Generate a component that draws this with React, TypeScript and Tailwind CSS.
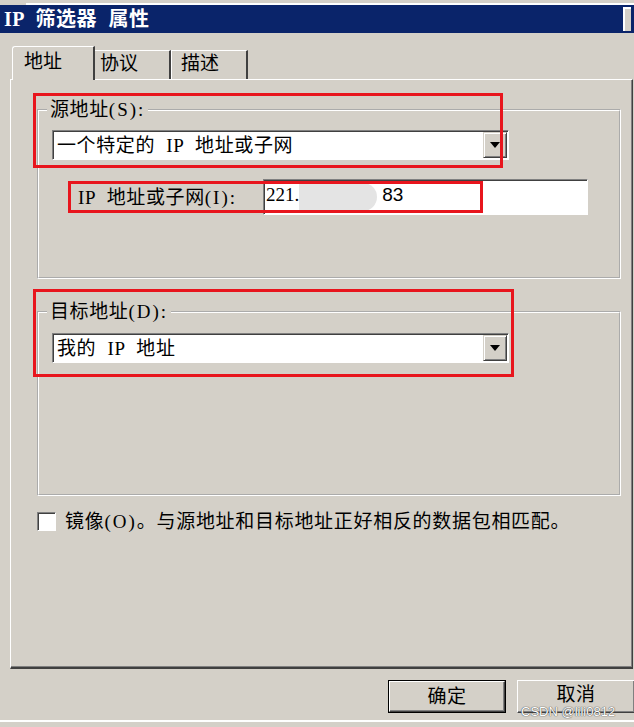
import React from "react";

function Arrow() {
  return (
    <svg width="10" height="6" viewBox="0 0 10 6">
      <path d="M0 0H10L5 6Z" fill="#000" />
    </svg>
  );
}

function Combo({ text }: { text: string }) {
  return (
    <div className="w-[457px] h-[30px] flex bg-white border border-t-[#808080] border-l-[#808080] border-b-white border-r-white shadow-[inset_1px_1px_0_#404040]">
      <div className="flex-1 flex items-center pl-[4px] pt-[1px] text-[19px] leading-none text-black whitespace-pre tracking-[0.6px] [word-spacing:6px]">
        {text}
      </div>
      <div className="w-[24px] h-[26px] mt-[1px] mr-[1px] bg-[#d4d0c8] flex items-center justify-center border border-t-[#d4d0c8] border-l-[#d4d0c8] border-b-[#404040] border-r-[#404040] shadow-[inset_1px_1px_0_#ffffff,inset_-1px_-1px_0_#808080]">
        <Arrow />
      </div>
    </div>
  );
}

export default function App() {
  return (
    <div className="w-[634px] h-[727px] bg-[#d4d0c8] relative overflow-hidden flex flex-col text-black font-[family-name:'Liberation_Serif','Noto_Sans_CJK_SC',serif]">
      <div className="h-[3px] shrink-0" />
      <div className="h-[2px] bg-white ml-[26px] shrink-0" />
      {/* title bar */}
      <div className="h-[28px] shrink-0 bg-[#0a246a] flex items-center pl-[4px] pr-[3px]">
        <span className="text-white font-bold text-[20px] leading-none tracking-[0.5px] [word-spacing:6px] whitespace-pre">
          IP 筛选器 属性
        </span>
        <div className="ml-auto w-[8px] h-[24px] bg-[#d4d0c8] border-l-2 border-t-2 border-white" />
      </div>
      <div className="h-[13px] shrink-0" />
      {/* tabs */}
      <div className="h-[33px] shrink-0 flex items-end pl-[12px] relative z-10">
        <div className="w-[83px] h-[34px] -mb-[1px] bg-[#d4d0c8] border-t border-l border-white rounded-tl-[3px] border-r-2 border-r-[#404040] pl-[11px] pt-[4px] text-[19px] leading-[22px]">
          地址
        </div>
        <div className="w-[76px] h-[29px] border-t border-white border-r-2 border-r-[#404040] pl-[5px] pt-[2px] text-[19px] leading-[22px]">
          协议
        </div>
        <div className="w-[77px] h-[29px] border-t border-l border-white border-r-2 border-r-[#404040] pl-[9px] pt-[2px] text-[19px] leading-[22px]">
          描述
        </div>
      </div>
      {/* panel */}
      <div className="ml-[10px] w-[623px] h-[590px] shrink-0 border-t border-l border-white border-r border-b-2 border-r-[#404040] border-b-[#404040] shadow-[inset_-1px_-1px_0_#808080] pl-[26px] pt-[19px] flex flex-col">
        <fieldset className="w-[584px] h-[180px] shrink-0 border-2 border-white [border-style:groove] px-[13px]">
          <legend className="-ml-[5px] px-[3px] text-[19px] leading-[22px] tracking-[0.6px]">
            源地址<span className="tracking-[2px]">(S):</span>
          </legend>
          <div className="mt-[9px]">
            <Combo text="一个特定的 IP 地址或子网" />
          </div>
          <div className="mt-[19px] flex items-center">
            <div className="w-[211px] pl-[26px] text-[19px] leading-none whitespace-pre tracking-[0.6px] [word-spacing:6px]">
              IP 地址或子网<span className="tracking-[2px]">(I):</span>
            </div>
            <div className="w-[325px] h-[36px] bg-white border border-t-[#808080] border-l-[#808080] border-b-white border-r-white shadow-[inset_1px_1px_0_#404040] flex items-center pl-[2px] pb-[6px]">
              <span className="text-[19px] leading-none">221.</span>
              <span className="inline-block w-[78px] h-[28px] mt-[5px] bg-[#e4e4e4] rounded-r-[14px]" />
              <span className="ml-[5px] text-[19px] leading-none font-[family-name:'Liberation_Sans',sans-serif]">83</span>
            </div>
          </div>
        </fieldset>
        <fieldset className="mt-[22px] w-[584px] h-[195px] shrink-0 border-2 border-white [border-style:groove] px-[13px]">
          <legend className="-ml-[5px] px-[3px] text-[19px] leading-[22px] tracking-[0.6px]">
            目标地址<span className="tracking-[2px]">(D):</span>
          </legend>
          <div className="mt-[10px]">
            <Combo text="我的 IP 地址" />
          </div>
        </fieldset>
        <div className="mt-[16px] flex items-center">
          <div className="w-[19px] h-[19px] bg-white border border-t-[#808080] border-l-[#808080] border-b-white border-r-white shadow-[inset_1px_1px_0_#404040]" />
          <span className="ml-[9px] text-[19px] leading-none tracking-[0.7px]">
            镜像<span className="tracking-[2px]">(O)</span>。与源地址和目标地址正好相反的数据包相匹配。
          </span>
        </div>
      </div>
      {/* buttons */}
      <div className="mt-[11px] h-[33px] shrink-0 flex pl-[388px] gap-[11px]">
        <div className="w-[118px] h-[33px] shrink-0 border border-black">
          <div className="w-full h-full flex items-center justify-center text-[19px] leading-none tracking-[0.5px] border border-t-white border-l-white border-b-[#404040] border-r-[#404040] shadow-[inset_-1px_-1px_0_#808080]">
            确定
          </div>
        </div>
        <div className="w-[118px] h-[33px] shrink-0 flex items-center justify-center pb-[4px] text-[19px] leading-none tracking-[0.5px] border border-t-white border-l-white border-b-[#404040] border-r-[#404040] shadow-[inset_-1px_-1px_0_#808080]">
          取消
        </div>
      </div>
      <div className="mt-[7px] h-[2px] shrink-0 bg-white" />

      {/* red annotation boxes */}
      <div className="absolute left-[33px] top-[93px] w-[470px] h-[75px] border-[3px] border-[#e8151d]" />
      <div className="absolute left-[68px] top-[181px] w-[415px] h-[32px] border-[3px] border-[#e8151d]" />
      <div className="absolute left-[33px] top-[289px] w-[481px] h-[88px] border-[3px] border-[#e8151d]" />
      {/* watermark */}
      <div className="absolute left-[521px] top-[705px] text-[13px] leading-none text-white font-[family-name:'Liberation_Sans',sans-serif] [text-shadow:0_0_1px_#444,0_0_1px_#444]">
        CSDN @lili0812
      </div>
    </div>
  );
}
